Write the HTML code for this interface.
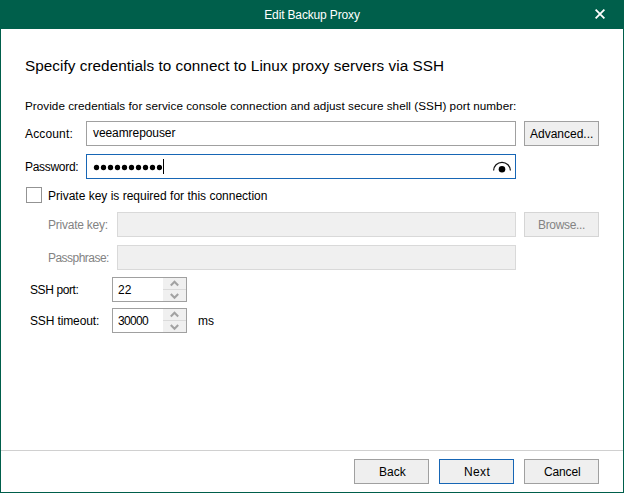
<!DOCTYPE html>
<html><head><meta charset="utf-8">
<style>
*{margin:0;padding:0;box-sizing:border-box}
html,body{width:624px;height:493px;overflow:hidden;background:#fff}
body{position:relative;font-family:"Liberation Sans",sans-serif;font-size:12px;color:#000}
.a{position:absolute;white-space:nowrap;line-height:14px}
.box{position:absolute;border:1px solid #a0a0a0;background:#fff}
.btn{position:absolute;border:1px solid #a0a0a0;background:#efefef;text-align:center}
</style></head><body>
<!-- window frame -->
<div style="position:absolute;left:0;top:0;width:624px;height:29px;background:#005f4b"></div>
<div style="position:absolute;left:0;top:0;width:1px;height:493px;background:#005f4b"></div>
<div style="position:absolute;left:623px;top:0;width:1px;height:493px;background:#005f4b"></div>
<div style="position:absolute;left:0;top:492px;width:624px;height:1px;background:#005f4b"></div>
<div class="a" style="left:0;width:624px;text-align:center;top:8px;color:#fff;letter-spacing:-0.15px">Edit Backup Proxy</div>
<svg style="position:absolute;left:595px;top:9px" width="10" height="10" viewBox="0 0 10 10"><path d="M0.6 0.6L9.4 9.4M9.4 0.6L0.6 9.4" stroke="#fff" stroke-width="1.8"/></svg>

<div class="a" style="left:25px;top:57px;font-size:15.3px;line-height:18px;letter-spacing:0.04px">Specify credentials to connect to Linux proxy servers via SSH</div>
<div class="a" style="left:25px;top:99px;font-size:11.7px;letter-spacing:0.045px">Provide credentials for service console connection and adjust secure shell (SSH) port number:</div>

<div class="a" style="left:25px;top:127px;letter-spacing:0.15px">Account:</div>
<div class="box" style="left:86px;top:121px;width:430px;height:25px"></div>
<div class="a" style="left:93px;top:126px;letter-spacing:-0.08px">veeamrepouser</div>
<div class="btn" style="left:524px;top:121px;width:75px;height:25px"></div>
<div class="a" style="left:530px;top:127px">Advanced...</div>

<div class="a" style="left:25px;top:160px;letter-spacing:-0.3px">Password:</div>
<div class="box" style="left:86px;top:154px;width:430px;height:25px;border-color:#1766b5"></div>
<svg style="position:absolute;left:90px;top:162px" width="72" height="11" viewBox="0 0 72 11"><circle cx="6.5" cy="5.5" r="2.65"/><circle cx="13.5" cy="5.5" r="2.65"/><circle cx="20.5" cy="5.5" r="2.65"/><circle cx="27.5" cy="5.5" r="2.65"/><circle cx="34.5" cy="5.5" r="2.65"/><circle cx="41.5" cy="5.5" r="2.65"/><circle cx="48.5" cy="5.5" r="2.65"/><circle cx="55.5" cy="5.5" r="2.65"/><circle cx="62.5" cy="5.5" r="2.65"/><circle cx="69.5" cy="5.5" r="2.65"/></svg>
<div style="position:absolute;left:163px;top:159px;width:1px;height:15px;background:#000"></div>
<svg style="position:absolute;left:490px;top:158px" width="24" height="18" viewBox="0 0 24 18"><path d="M3.6 12.6A8.4 8.3 0 0 1 20.4 12.6" fill="none" stroke="#111" stroke-width="1.2"/><circle cx="12" cy="11.3" r="3.3" fill="#000"/></svg>

<div style="position:absolute;left:26px;top:187px;width:16px;height:16px;border:1px solid #939393;background:#fff"></div>
<div class="a" style="left:48px;top:189px">Private key is required for this connection</div>

<div class="a" style="left:48px;top:218px;color:#838383;letter-spacing:-0.24px">Private key:</div>
<div class="box" style="left:117px;top:212px;width:399px;height:25px;background:#f0f0f0;border-color:#d9d9d9"></div>
<div class="btn" style="left:524px;top:212px;width:75px;height:25px;border-color:#d5d5d5;background:#efefef"></div>
<div class="a" style="left:538px;top:218px;color:#838383;letter-spacing:-0.33px">Browse...</div>

<div class="a" style="left:48px;top:251px;color:#838383;letter-spacing:-0.53px">Passphrase:</div>
<div class="box" style="left:117px;top:245px;width:399px;height:25px;background:#f0f0f0;border-color:#d9d9d9"></div>

<div class="a" style="left:30px;top:283px;letter-spacing:-0.4px">SSH port:</div>
<div class="box" style="left:112px;top:277px;width:75px;height:25px"></div>
<div style="position:absolute;left:163px;top:278px;width:23px;height:23px;background:#f0f0f0"></div>
<div class="a" style="left:118px;top:283px">22</div><div style="position:absolute;left:163px;top:289px;width:23px;height:1px;background:#dadada"></div><svg style="position:absolute;left:163px;top:277px" width="23" height="25" viewBox="0 0 23 25"><path d="M7.8 8.4L11.5 4.8L15.2 8.4M7.8 17.1L11.5 20.7L15.2 17.1" fill="none" stroke="#a2a2a2" stroke-width="2.1"/></svg>

<div class="a" style="left:30px;top:314px;letter-spacing:-0.13px">SSH timeout:</div>
<div class="box" style="left:112px;top:308px;width:75px;height:25px"></div>
<div style="position:absolute;left:163px;top:309px;width:23px;height:23px;background:#f0f0f0"></div>
<div class="a" style="left:118px;top:314px;letter-spacing:-0.7px">30000</div><div style="position:absolute;left:163px;top:320px;width:23px;height:1px;background:#dadada"></div><svg style="position:absolute;left:163px;top:308px" width="23" height="25" viewBox="0 0 23 25"><path d="M7.8 8.4L11.5 4.8L15.2 8.4M7.8 17.1L11.5 20.7L15.2 17.1" fill="none" stroke="#a2a2a2" stroke-width="2.1"/></svg>
<div class="a" style="left:198px;top:314px">ms</div>

<div style="position:absolute;left:1px;top:450px;width:622px;height:1px;background:#d0d0d0"></div>
<div class="btn" style="left:354px;top:459px;width:75px;height:25px"></div>
<div class="a" style="left:379px;top:465px">Back</div>
<div class="btn" style="left:439px;top:459px;width:75px;height:25px;border-color:#1766b5"></div>
<div class="a" style="left:464px;top:465px;letter-spacing:0.35px">Next</div>
<div class="btn" style="left:524px;top:459px;width:75px;height:25px"></div>
<div class="a" style="left:544px;top:465px;letter-spacing:-0.14px">Cancel</div>
</body></html>
